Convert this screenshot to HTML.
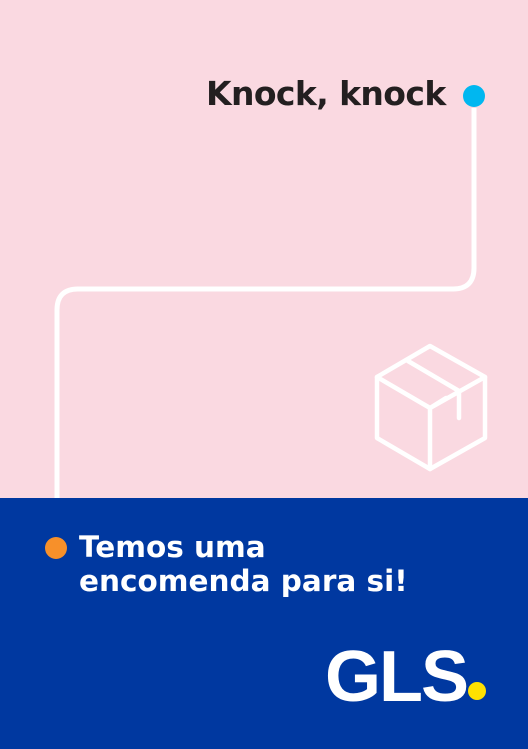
<!DOCTYPE html><html><head><style>
body{margin:0;width:528px;height:749px;overflow:hidden;background:#fad9e1;position:relative;font-family:"Liberation Sans",sans-serif}
.t{position:absolute;font-weight:bold}
</style></head><body>
<svg width="528" height="749" style="position:absolute;left:0;top:0">
<path d="M474 108 V268 Q474 289 453 289 H78 Q57 289 57 310 V500" fill="none" stroke="#fff" stroke-width="5"/>
<circle cx="474" cy="96" r="11" fill="#00b7f0"/>
<g fill="none" stroke="#fff" stroke-width="4.5" stroke-linejoin="round" stroke-linecap="round">
<path d="M430 346 L485 377 V438 L430 469 L377 438 V377 Z"/>
<path d="M377 377 L430 408 L485 377 M430 408 V469 M408 361 L459 391 V418 M430 408 L446 398"/>
</g>
<rect x="0" y="498" width="528" height="251" fill="#0038a0"/>
<circle cx="56" cy="548" r="11" fill="#f7902a"/>
<circle cx="477" cy="691" r="9" fill="#ffe100"/>
</svg>
<div class="t" style="left:206px;top:74px;font-size:33px;color:#231f20;font-family:'DejaVu Sans',sans-serif;letter-spacing:-0.6px">Knock, knock</div>
<div class="t" style="left:79px;top:530px;font-size:29.5px;line-height:34px;color:#fff;font-family:'DejaVu Sans',sans-serif">Temos uma<br>encomenda para si!</div>
<div class="t" style="left:325px;top:636px;font-size:72px;color:#fff;font-weight:900;letter-spacing:-2px">GLS</div>
</body></html>
